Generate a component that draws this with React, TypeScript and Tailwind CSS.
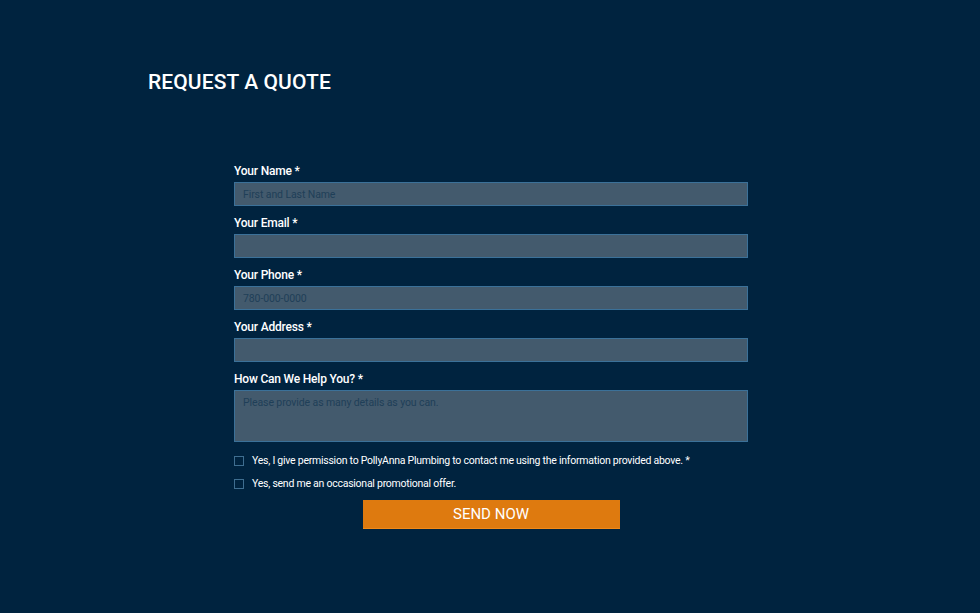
import React from "react";

const fields = [
  { label: "Your Name *", placeholder: "First and Last Name" },
  { label: "Your Email *", placeholder: "" },
  { label: "Your Phone *", placeholder: "780-000-0000" },
  { label: "Your Address *", placeholder: "" },
];

const inputCls =
  "block w-full h-[24px] bg-[#435a6d] border border-[#3b7199] px-[8px] text-[10.5px] tracking-[-0.1px] text-white placeholder:text-[#1f3f58] outline-none";

const App: React.FC = () => {
  return (
    <div className="min-h-[613px] w-full bg-[#00233f] font-['Roboto',sans-serif] text-white pt-[68px]">
      {/* Titre */}
      <h1 className="ml-[148px] text-[21px] leading-[28px] font-medium tracking-[0.1px]">
        REQUEST A QUOTE
      </h1>

      {/* Formulaire */}
      <form className="ml-[234px] w-[514px] mt-[68px]">
        {fields.map(({ label, placeholder }) => (
          <div key={label} className="mb-[10px]">
            <label className="block text-[12px] leading-[14px] font-medium tracking-[-0.2px] mb-[4px]">{label}</label>
            <input className={inputCls} placeholder={placeholder} />
          </div>
        ))}

        <div>
          <label className="block text-[12px] leading-[14px] font-medium tracking-[-0.2px] mb-[4px]">How Can We Help You? *</label>
          <textarea
            className="block w-full h-[52px] resize-none bg-[#435a6d] border border-[#3b7199] px-[8px] py-[5px] text-[10.5px] tracking-[-0.1px] leading-[14px] text-white placeholder:text-[#1f3f58] outline-none"
            placeholder="Please provide as many details as you can."
          />
        </div>

        {/* Cases à cocher */}
        <div className="mt-[12px] flex flex-col gap-[10px]">
          <label className="flex items-center gap-[8px] text-[10.5px] leading-[13px] tracking-[-0.25px]">
            <span className="w-[10px] h-[10px] border border-[#3f6e90] shrink-0" />
            <span>Yes, I give permission to PollyAnna Plumbing to contact me using the information provided above. *</span>
          </label>
          <label className="flex items-center gap-[8px] text-[10.5px] leading-[13px] tracking-[-0.25px]">
            <span className="w-[10px] h-[10px] border border-[#3f6e90] shrink-0" />
            <span>Yes, send me an occasional promotional offer.</span>
          </label>
        </div>

        <div className="flex justify-center mt-[10px]">
          <button
            type="button"
            className="w-[257px] h-[29px] bg-[#de7a0f] border-b border-[#f08a1a] text-[15px] leading-[29px] text-white"
          >
            SEND NOW
          </button>
        </div>
      </form>
    </div>
  );
};

export default App;
